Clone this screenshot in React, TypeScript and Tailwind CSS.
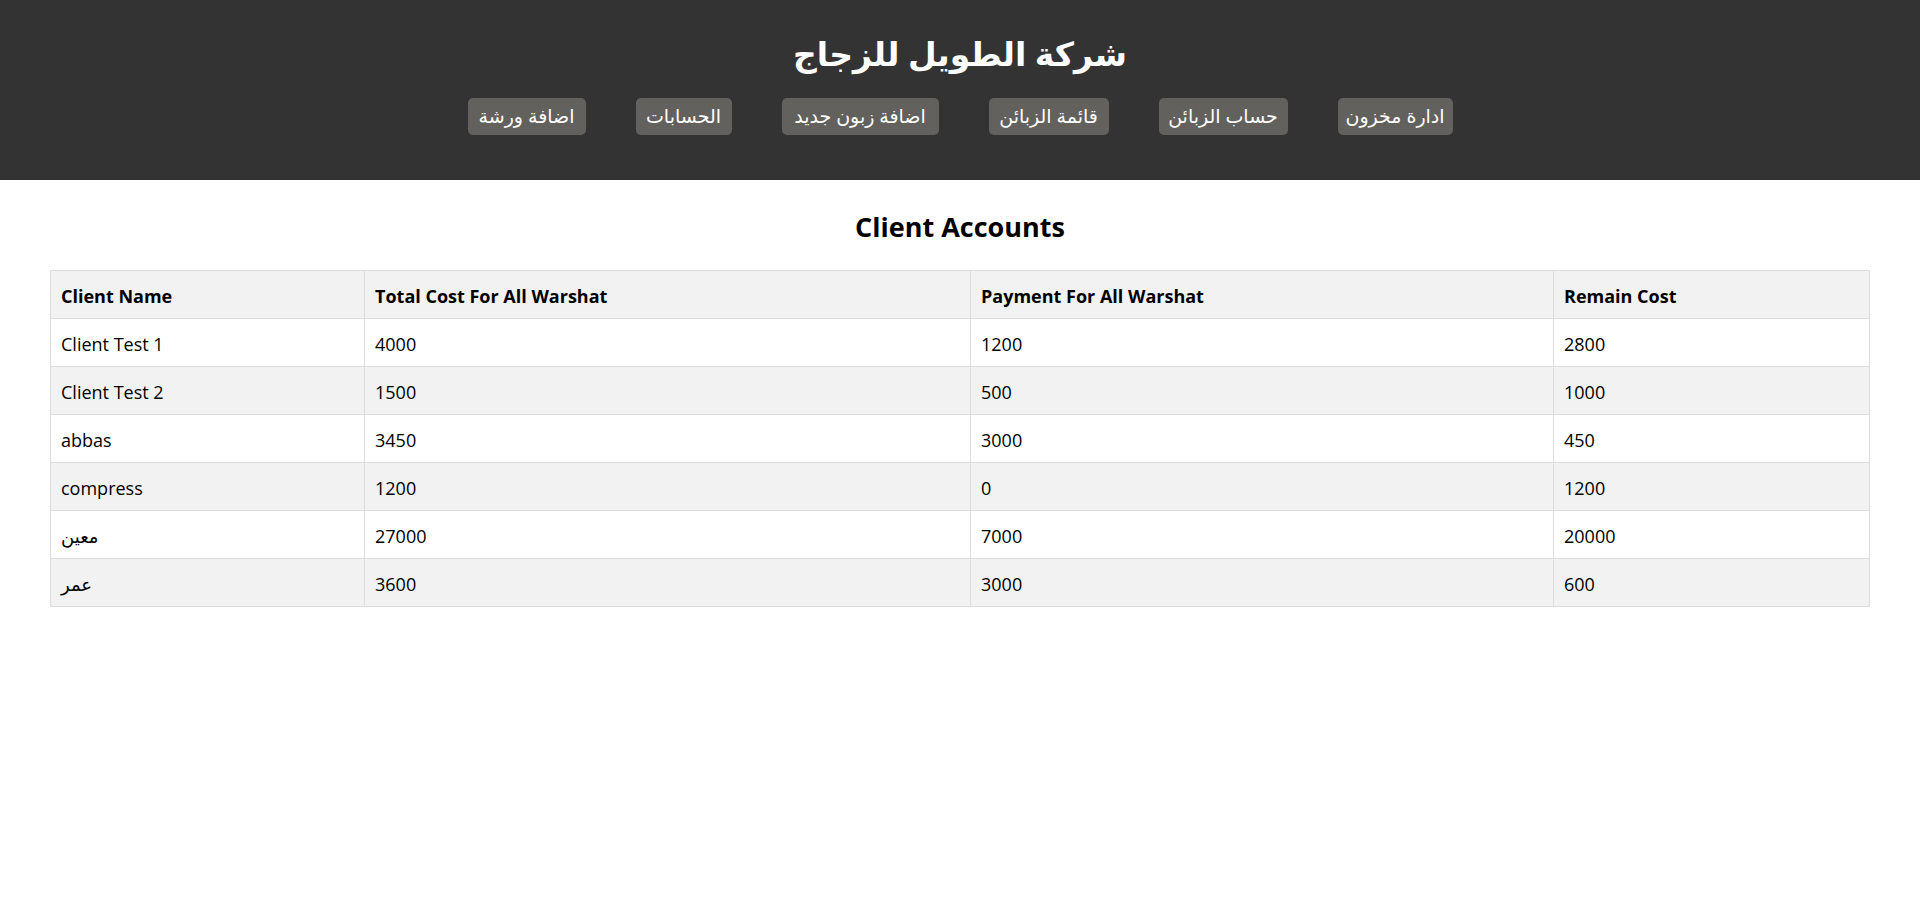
import React from "react";

const navItems = [
  { label: "ادارة مخزون", w: "w-[115px]" },
  { label: "حساب الزبائن", w: "w-[129px]" },
  { label: "قائمة الزبائن", w: "w-[120px]" },
  { label: "اضافة زبون جديد", w: "w-[157px]" },
  { label: "الحسابات", w: "w-[96px]" },
  { label: "اضافة ورشة", w: "w-[118px]" },
];

const rows = [
  ["Client Test 1", "4000", "1200", "2800"],
  ["Client Test 2", "1500", "500", "1000"],
  ["abbas", "3450", "3000", "450"],
  ["compress", "1200", "0", "1200"],
  ["معين", "27000", "7000", "20000"],
  ["عمر", "3600", "3000", "600"],
];

export default function App() {
  return (
    <div
      className="min-h-[922px] bg-white text-black"
      style={{ fontFamily: '"Open Sans", "Noto Sans", "DejaVu Sans", sans-serif' }}
    >
      <header className="h-[180px] bg-[#333333] flex flex-col items-center">
        <h1 className="mt-[31px] text-[33px] leading-[46px] font-bold text-white" dir="rtl">
          شركة الطويل للزجاج
        </h1>
        <nav dir="rtl" className="mt-[21px] flex gap-[50px]">
          {navItems.map((n) => (
            <a
              key={n.label}
              className={`${n.w} h-[37px] flex items-center justify-center rounded-[5px] bg-[#62615d] text-white text-[19px] whitespace-nowrap`}
            >
              {n.label}
            </a>
          ))}
        </nav>
      </header>
      <main>
        <h2 className="mt-[30px] text-center text-[27px] leading-[34px] font-bold">Client Accounts</h2>
        <div className="mx-[50px] mt-[26px]">
          <table className="w-full table-fixed border-collapse text-[18px]">
            <colgroup>
              <col className="w-[314px]" />
              <col className="w-[606px]" />
              <col className="w-[583px]" />
              <col />
            </colgroup>
            <thead>
              <tr className="bg-[#f2f2f2] h-[48px]">
                {["Client Name", "Total Cost For All Warshat", "Payment For All Warshat", "Remain Cost"].map((h) => (
                  <th key={h} className="border border-[#dddddd] px-[10px] pt-[3px] pb-0 text-left font-bold">
                    {h}
                  </th>
                ))}
              </tr>
            </thead>
            <tbody>
              {rows.map((r, i) => (
                <tr key={i} className={`h-[48px] ${i % 2 === 1 ? "bg-[#f2f2f2]" : "bg-white"}`}>
                  {r.map((c, j) => (
                    <td key={j} className="border border-[#dddddd] px-[10px] pt-[3px] pb-0 text-left">
                      {c}
                    </td>
                  ))}
                </tr>
              ))}
            </tbody>
          </table>
        </div>
      </main>
    </div>
  );
}
